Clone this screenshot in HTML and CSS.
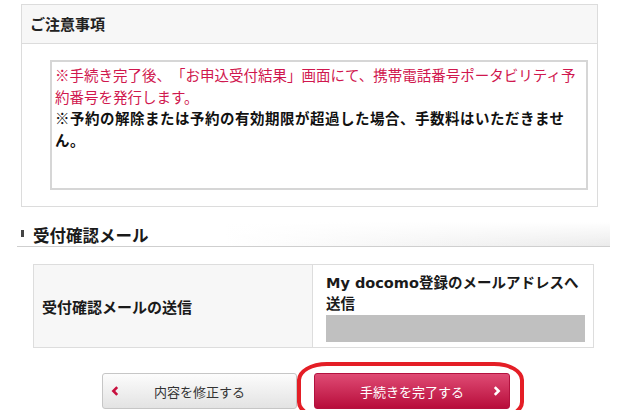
FILE: index.html
```html
<!DOCTYPE html>
<html lang="ja">
<head>
<meta charset="utf-8">
<title>受付確認</title>
<link rel="stylesheet" href="styles.css">
</head>
<body>
<div class="page">
  <section class="notice">
    <h2 class="notice-head">ご注意事項</h2>
    <div class="notice-body">
      <div class="notice-box">
        <p class="red">※手続き完了後、「お申込受付結果」画面にて、携帯電話番号ポータビリティ予約番号を発行します。</p>
        <p class="strong">※予約の解除または予約の有効期限が超過した場合、手数料はいただきません。</p>
      </div>
    </div>
  </section>

  <h2 class="sec-head"><span class="marker"></span>受付確認メール</h2>

  <dl class="info">
    <dt class="info-label">受付確認メールの送信</dt>
    <dd class="info-value">
      <p class="info-text">My docomo登録のメールアドレスへ送信</p>
      <div class="masked"></div>
    </dd>
  </dl>

  <div class="actions">
    <button class="btn btn-back" type="button">
      <svg class="chev" width="8" height="10" viewBox="0 0 8 10"><path d="M6.2 1.2 L2.4 5 L6.2 8.8" fill="none" stroke="#c8103e" stroke-width="2.6"/></svg>
      <span class="btn-label">内容を修正する</span>
      <span></span>
    </button>
    <button class="btn btn-done" type="button">
      <span></span>
      <span class="btn-label">手続きを完了する</span>
      <svg class="chev chev-right" width="8" height="10" viewBox="0 0 8 10"><path d="M1.8 1.2 L5.6 5 L1.8 8.8" fill="none" stroke="#ffffff" stroke-width="2.6"/></svg>
    </button>
    <span class="highlight"></span>
  </div>
</div>
</body>
</html>
```

FILE: styles.css
```css
* { box-sizing: border-box; }

html, body {
  margin: 0;
  padding: 0;
  background: #fff;
}

body {
  width: 618px;
  height: 410px;
  overflow: hidden;
  font-family: "Noto Sans CJK JP", "Noto Sans", sans-serif;
  color: #1a1a1a;
  text-spacing-trim: space-all;
}

.page {
  padding-top: 4px;
}

/* notice box */
.notice {
  margin: 0 0 0 21px;
  width: 577px;
  border: 1px solid #dcdcdc;
}

.notice-head {
  margin: 0;
  height: 39px;
  padding-left: 8px;
  background: #f7f7f7;
  border-bottom: 1px solid #dcdcdc;
  font-size: 15px;
  font-weight: bold;
  line-height: 38px;
  color: #222;
}

.notice-body {
  padding: 16px 9px 16px 28px;
}

.notice-box {
  height: 130px;
  border: 2px solid #d6d6d6;
  padding: 2px 1px 0 3px;
}

.notice-box p {
  margin: 0;
  font-size: 14.5px;
  line-height: 21.5px;
}

.red {
  color: #d0174e;
}

.strong {
  font-weight: bold;
  letter-spacing: 0.5px;
  color: #111;
}

/* section heading */
.sec-head {
  margin: 15px 0 0 17px;
  width: 593px;
  height: 25px;
  padding: 1px 0 0 4px;
  display: flex;
  align-items: center;
  border-bottom: 1px solid #cfcfcf;
  background:
    linear-gradient(to bottom, rgba(255,255,255,1), rgba(255,255,255,0)),
    linear-gradient(to right, #fff 35%, #ebebeb);
  font-size: 16.5px;
  font-weight: bold;
  color: #1a1a1a;
}

.marker {
  width: 3px;
  height: 7px;
  margin-right: 9px;
  margin-top: -3px;
  background: #444;
}

/* info table */
.info {
  margin: 17px 0 0 33px;
  width: 561px;
  display: grid;
  grid-template-columns: 279px 1fr;
  border: 1px solid #dddddd;
}

.info-label {
  display: flex;
  align-items: center;
  padding-left: 8px;
  background: #f7f7f7;
  border-right: 1px solid #dddddd;
  font-size: 15px;
  font-weight: bold;
  color: #1a1a1a;
}

.info-value {
  margin: 0;
  padding: 8px 8px 5px 13px;
}

.info-text {
  margin: 0;
  font-family: "DejaVu Sans", "Noto Sans CJK JP", sans-serif;
  font-size: 14.5px;
  line-height: 21px;
  font-weight: bold;
  color: #1a1a1a;
}

.masked {
  height: 27px;
  background: #c0c0c0;
}

/* buttons */
.actions {
  position: relative;
  margin-top: 25px;
  padding-left: 102px;
  display: flex;
  gap: 17px;
}

.btn {
  height: 36px;
  padding: 0 8px;
  display: grid;
  grid-template-columns: 16px 1fr 16px;
  align-items: center;
  border-radius: 3px;
  font-family: "Noto Sans CJK JP", "Noto Sans", sans-serif;
  font-size: 13px;
  cursor: pointer;
}

.btn-label {
  text-align: center;
}

.btn-back {
  width: 195px;
  border: 1px solid #c6c6c6;
  background: linear-gradient(to bottom, #fcfcfc, #e3e3e3);
  color: #333;
}

.btn-done {
  width: 196px;
  border: 1px solid #b3123f;
  background: linear-gradient(to bottom, #df4b74, #b80d3b);
  color: #fff;
}

.chev {
  display: block;
}

.chev-right {
  justify-self: end;
}

.highlight {
  position: absolute;
  left: 297px;
  top: -11px;
  width: 227px;
  height: 58px;
  border: 4px solid #e41e26;
  border-radius: 30px / 18px;
  pointer-events: none;
}
```
